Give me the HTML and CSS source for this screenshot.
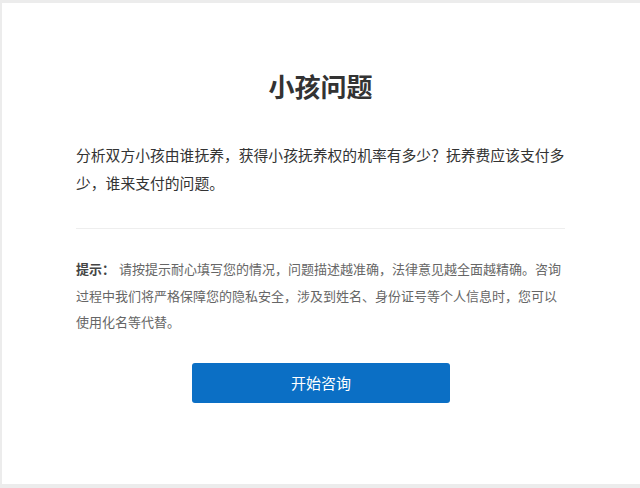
FILE: index.html
```html
<!DOCTYPE html>
<html lang="zh-CN">
<head>
<meta charset="utf-8">
<title>小孩问题</title>
<link rel="stylesheet" href="styles.css">
</head>
<body>
<div class="card">
  <h1 class="title">小孩问题</h1>
  <p class="desc">分析双方小孩由谁抚养，获得小孩抚养权的机率有多少？抚养费应该支付多少，谁来支付的问题。</p>
  <div class="divider"></div>
  <p class="tips"><span class="tips-label">提示：</span>请按提示耐心填写您的情况，问题描述越准确，法律意见越全面越精确。咨询过程中我们将严格保障您的隐私安全，涉及到姓名、身份证号等个人信息时，您可以使用化名等代替。</p>
  <div class="actions"><button class="btn">开始咨询</button></div>
</div>
</body>
</html>
```

FILE: styles.css
```css
html, body {
  margin: 0;
  padding: 0;
}
body {
  background: #ececec;
  font-family: "Noto Sans CJK SC", "Noto Sans", sans-serif;
  width: 640px;
  height: 488px;
  overflow: hidden;
}
.card {
  margin: 3px 0 0 2px;
  height: 481px;
  background: #fff;
  padding: 0 75px 0 74px;
  box-sizing: border-box;
  display: flex;
  flex-direction: column;
}
.title {
  margin: 65px 0 0;
  font-size: 26px;
  line-height: 36px;
  font-weight: 700;
  color: #333;
  text-align: center;
}
.desc {
  margin: 37px 0 0;
  font-size: 14.8px;
  line-height: 28px;
  color: #333;
}
.divider {
  margin-top: 31px;
  height: 1px;
  background: #eeeeee;
}
.tips {
  margin: 27px 0 0;
  font-size: 13px;
  line-height: 26.5px;
  color: #666;
}
.tips-label {
  color: #444;
  font-weight: 700;
  margin-right: 4px;
}
.actions {
  margin-top: 27px;
  display: flex;
  justify-content: center;
  padding-left: 1px;
}
.btn {
  width: 258px;
  height: 40px;
  border: none;
  border-radius: 3px;
  background: #0b6fc5;
  color: #fff;
  font-family: inherit;
  font-size: 15px;
  cursor: pointer;
}
```
